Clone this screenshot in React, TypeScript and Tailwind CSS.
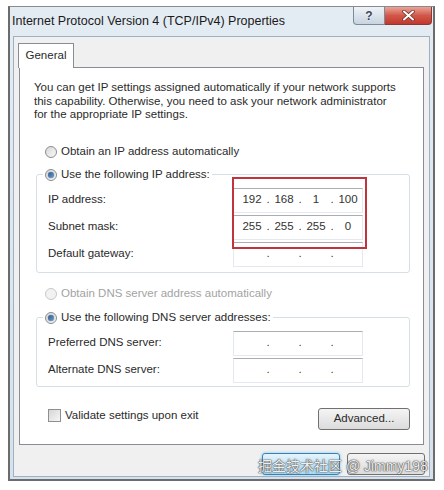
import React from "react";

const FONT = '"Liberation Sans", "Noto Sans CJK SC", sans-serif';

function Radio({ checked, disabled }: { checked?: boolean; disabled?: boolean }) {
  return (
    <span
      className={
        "relative flex h-[12px] w-[12px] shrink-0 items-center justify-center rounded-full border " +
        (disabled
          ? "border-[#c8c8c8] bg-[#f2f2f2]"
          : "border-[#8a8c8e] bg-gradient-to-br from-[#d8d8d8] to-[#f8f8f8]")
      }
    >
      {checked && (
        <span className="h-[6px] w-[6px] rounded-full bg-gradient-to-br from-[#2c5a8c] to-[#6d9ccc] shadow-[0_0_1px_#183c66]" />
      )}
    </span>
  );
}

function IpField({ parts }: { parts?: string[] }) {
  const p = parts ?? ["", "", "", ""];
  return (
    <div className="flex h-[25px] w-[130px] items-center border border-[#e3e9ef] border-t-[#abadb3] bg-white pl-[5px] text-[11.5px] text-[#333333]">
      <span className="w-[26px] text-center">{p[0]}</span>
      <span className="w-[6px] text-center">.</span>
      <span className="w-[26px] text-center">{p[1]}</span>
      <span className="w-[6px] text-center">.</span>
      <span className="w-[26px] text-center">{p[2]}</span>
      <span className="w-[6px] text-center">.</span>
      <span className="w-[26px] text-center">{p[3]}</span>
    </div>
  );
}

function FieldRow({ label, parts }: { label: string; parts?: string[] }) {
  return (
    <div className="flex h-[27px] items-center pl-[11px]">
      <span className="w-[185px] text-[#2a2a2a]">{label}</span>
      <IpField parts={parts} />
    </div>
  );
}

export default function App() {
  return (
    <div className="relative h-[490px] w-[444px] overflow-hidden bg-white pl-[8px] pt-[6px]" style={{ fontFamily: FONT }}>
      <div className="flex h-[475px] w-[427px] flex-col border-2 border-t border-[#6c6c6c] border-t-[#8a8a8a] bg-gradient-to-b from-[#e4ecf3] to-[#d5e1ec]">
        {/* Title bar */}
        <div className="flex h-[29px] shrink-0 items-start">
          <div className="pl-[2px] pt-[7px] text-[12.5px] leading-[14px] text-[#1a1a1a]">
            Internet Protocol Version 4 (TCP/IPv4) Properties
          </div>
          <div className="ml-auto mr-[1px] flex">
            <div className="flex h-[18px] w-[32px] items-center justify-center rounded-bl-[4px] border border-t-0 border-[#7d8a9a] bg-gradient-to-b from-[#eef3f8] to-[#c8d4e0] text-[12px] font-bold leading-none text-[#3a4658] [text-shadow:0_0_2px_#ffffff]">
              ?
            </div>
            <div className="flex h-[18px] w-[47px] items-center justify-center rounded-br-[4px] border border-l-0 border-t-0 border-[#8a3a34] bg-gradient-to-b from-[#e8a497] via-[#d2574a] to-[#c2382c]">
              <svg width="13" height="11" viewBox="0 0 13 11">
                <path d="M2 1.5 L11 9.5 M11 1.5 L2 9.5" stroke="#6b2a24" strokeWidth="3.4" strokeLinecap="round" />
                <path d="M2 1.5 L11 9.5 M11 1.5 L2 9.5" stroke="#ffffff" strokeWidth="2" strokeLinecap="round" />
              </svg>
            </div>
          </div>
        </div>

        {/* Client area */}
        <div className="mx-[3px] mb-[2px] flex flex-1 flex-col border border-[#9fb0c2] bg-[#f0f0f0]">
          {/* Tab strip */}
          <div className="mt-[6px] flex pl-[4px]">
            <div className="relative z-10 -mb-px flex h-[25px] w-[56px] items-center justify-center border border-b-0 border-[#898c95] bg-white text-[11.5px] text-[#2a2a2a]">
              General
            </div>
          </div>

          {/* Panel */}
          <div className="ml-[5px] flex h-[378px] w-[405px] flex-col border border-[#898c95] bg-white pt-[13px] text-[11.5px] text-[#2a2a2a]">
            <p className="pl-[14px] leading-[13.5px]">
              You can get IP settings assigned automatically if your network supports
              <br />
              this capability. Otherwise, you need to ask your network administrator
              <br />
              for the appropriate IP settings.
            </p>

            <div className="mt-[22px] flex h-[16px] items-center gap-[4px] pl-[25px]">
              <Radio />
              <span>Obtain an IP address automatically</span>
            </div>

            {/* IP group */}
            <div className="ml-[16px] mr-[13px] mt-[14px] flex flex-col rounded-[3px] border border-[#d5dfe5] pb-[4px]">
              <div className="-mt-[8px] ml-[6px] flex h-[16px] w-fit items-center gap-[4px] bg-white px-[2px]">
                <Radio checked />
                <span>Use the following IP address:</span>
              </div>
              <div className="mt-[4px] flex flex-col">
                <FieldRow label="IP address:" parts={["192", "168", "1", "100"]} />
                <FieldRow label="Subnet mask:" parts={["255", "255", "255", "0"]} />
                <FieldRow label="Default gateway:" />
              </div>
            </div>

            <div className="mt-[13px] flex h-[16px] items-center gap-[4px] pl-[25px] text-[#a3a3a3]">
              <Radio disabled />
              <span>Obtain DNS server address automatically</span>
            </div>

            {/* DNS group */}
            <div className="ml-[16px] mr-[13px] mt-[15px] flex flex-col rounded-[3px] border border-[#d5dfe5] pb-[2px]">
              <div className="-mt-[8px] ml-[6px] flex h-[16px] w-fit items-center gap-[4px] bg-white px-[2px]">
                <Radio checked />
                <span>Use the following DNS server addresses:</span>
              </div>
              <div className="mt-[4px] flex flex-col">
                <FieldRow label="Preferred DNS server:" />
                <FieldRow label="Alternate DNS server:" />
              </div>
            </div>

            <div className="mr-[13px] mt-[20px] flex items-start pl-[28px]">
              <div className="flex items-center gap-[4px]">
                <span className="h-[13px] w-[13px] border border-[#8f8f8f] bg-gradient-to-br from-[#d6d6d6] to-[#f6f6f6]" />
                <span>Validate settings upon exit</span>
              </div>
              <div className="ml-auto mt-[1px] flex h-[22px] w-[92px] items-center justify-center rounded-[3px] border border-[#707070] bg-gradient-to-b from-[#f4f4f4] to-[#dcdcdc] text-[#2a2a2a]">
                Advanced...
              </div>
            </div>
          </div>

          {/* Bottom buttons */}
          <div className="mr-[4px] mt-[8px] flex justify-end gap-[7px]">
            <div className="h-[22px] w-[78px] rounded-[3px] border border-[#3c7fb1] bg-gradient-to-b from-[#e5f4fc] to-[#a7d9f5] shadow-[0_0_3px_#6cc3f0]" />
            <div className="h-[22px] w-[78px] rounded-[3px] border border-[#707070] bg-gradient-to-b from-[#f4f4f4] to-[#dcdcdc]" />
          </div>
        </div>
      </div>

      {/* Red highlight annotation */}
      <div className="absolute left-[232px] top-[177px] h-[72px] w-[135px] border-2 border-[#c1343c]" />

      {/* Watermark */}
      <div className="absolute left-[258px] top-[457px] whitespace-nowrap text-[14px] leading-[18px] text-[#eeeeee] [text-shadow:0_0_1px_#4a4a4a,0_0_1px_#4a4a4a,0_0_2px_#6a6a6a]">
        掘金技术社区 @ Jimmy198
      </div>
    </div>
  );
}
